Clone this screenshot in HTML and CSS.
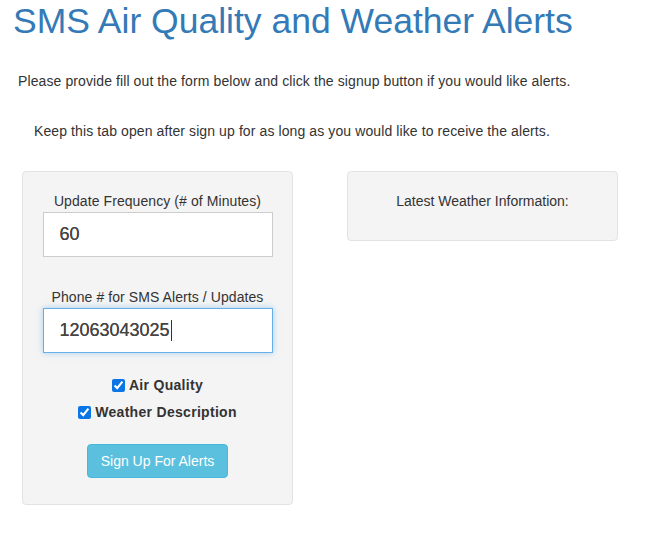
FILE: index.html
```html
<!DOCTYPE html>
<html>
<head>
<meta charset="utf-8">
<link rel="stylesheet" href="styles.css">
</head>
<body>
<div class="page">
  <h1 class="title">SMS Air Quality and Weather Alerts</h1>
  <p class="intro">Please provide fill out the form below and click the signup button if you would like alerts.</p>
  <p class="intro indent">Keep this tab open after sign up for as long as you would like to receive the alerts.</p>
  <div class="row">
    <div class="well form-well">
      <label class="field-label" for="freq">Update Frequency (# of Minutes)</label>
      <input class="field" id="freq" type="text" value="60">
      <label class="field-label second" for="phone">Phone # for SMS Alerts / Updates</label>
      <div class="field focused" id="phone">12063043025<span class="caret"></span></div>
      <div class="checks">
        <label class="check"><input type="checkbox" checked> Air Quality</label>
        <label class="check"><input type="checkbox" checked> Weather Description</label>
      </div>
      <button class="btn">Sign Up For Alerts</button>
    </div>
    <div class="well info-well">
      <div class="info-title">Latest Weather Information:</div>
    </div>
  </div>
</div>
</body>
</html>
```
FILE: styles.css
```css
* { box-sizing: border-box; }
html, body { margin: 0; padding: 0; background: #fff; }
body {
  font-family: "Liberation Sans", Arial, sans-serif;
  font-size: 14px;
  color: #333;
}
.page { padding: 0 0 0 13px; }
.title {
  margin: 0;
  padding-top: 2px;
  font-size: 35.5px;
  font-weight: 400;
  line-height: 1.1;
  color: #337ab7;
}
.intro {
  margin: 0;
  padding-left: 5px;
  line-height: 18px;
  letter-spacing: 0.1px;
}
.intro:first-of-type { margin-top: 31px; }
.intro.indent { margin-top: 32px; padding-left: 21px; }
.row {
  display: flex;
  gap: 54px;
  margin-top: 31px;
  padding-left: 9px;
  align-items: flex-start;
}
.well {
  width: 271px;
  background: #f4f4f4;
  border: 1px solid #e3e3e3;
  border-radius: 4px;
}
.form-well {
  display: flex;
  flex-direction: column;
  align-items: center;
  padding: 21px 0 26px;
}
.field-label {
  display: block;
  font-size: 14px;
  line-height: 16px;
  margin-bottom: 3px;
  letter-spacing: 0.08px;
}
.field-label.second { margin-top: 32px; }
.field {
  width: 230px;
  height: 45px;
  border: 1px solid #ccc;
  background: #fff;
  font-family: "Liberation Sans", Arial, sans-serif;
  font-size: 18px;
  color: #444;
  padding: 0 16px;
  margin: 0;
  outline: none;
  display: flex;
  align-items: center;
  text-shadow: 0 0 0.4px #444;
}
.field.focused {
  border-color: #66afe9;
  box-shadow: 0 0 6px rgba(102, 175, 233, 0.55);
}
.caret {
  display: inline-block;
  width: 1px;
  height: 21px;
  background: #333;
  margin-left: 1px;
}
.checks {
  margin-top: 23px;
  display: flex;
  flex-direction: column;
  align-items: center;
  gap: 8px;
}
.check {
  font-weight: 700;
  font-size: 14px;
  line-height: 19px;
  letter-spacing: 0.3px;
  display: flex;
  align-items: center;
  gap: 4px;
}
.check input {
  margin: 0;
  width: 13px;
  height: 13px;
  accent-color: #0b75e6;
}
.btn {
  margin-top: 22px;
  width: 141px;
  height: 34px;
  background: #5bc0de;
  border: 1px solid #46b8da;
  border-radius: 4px;
  color: #fff;
  font-family: "Liberation Sans", Arial, sans-serif;
  font-size: 14px;
  padding: 0;
}
.info-well {
  height: 70px;
  padding-top: 21px;
  text-align: center;
}
.info-title {
  font-size: 14px;
  line-height: 16px;
}
```
